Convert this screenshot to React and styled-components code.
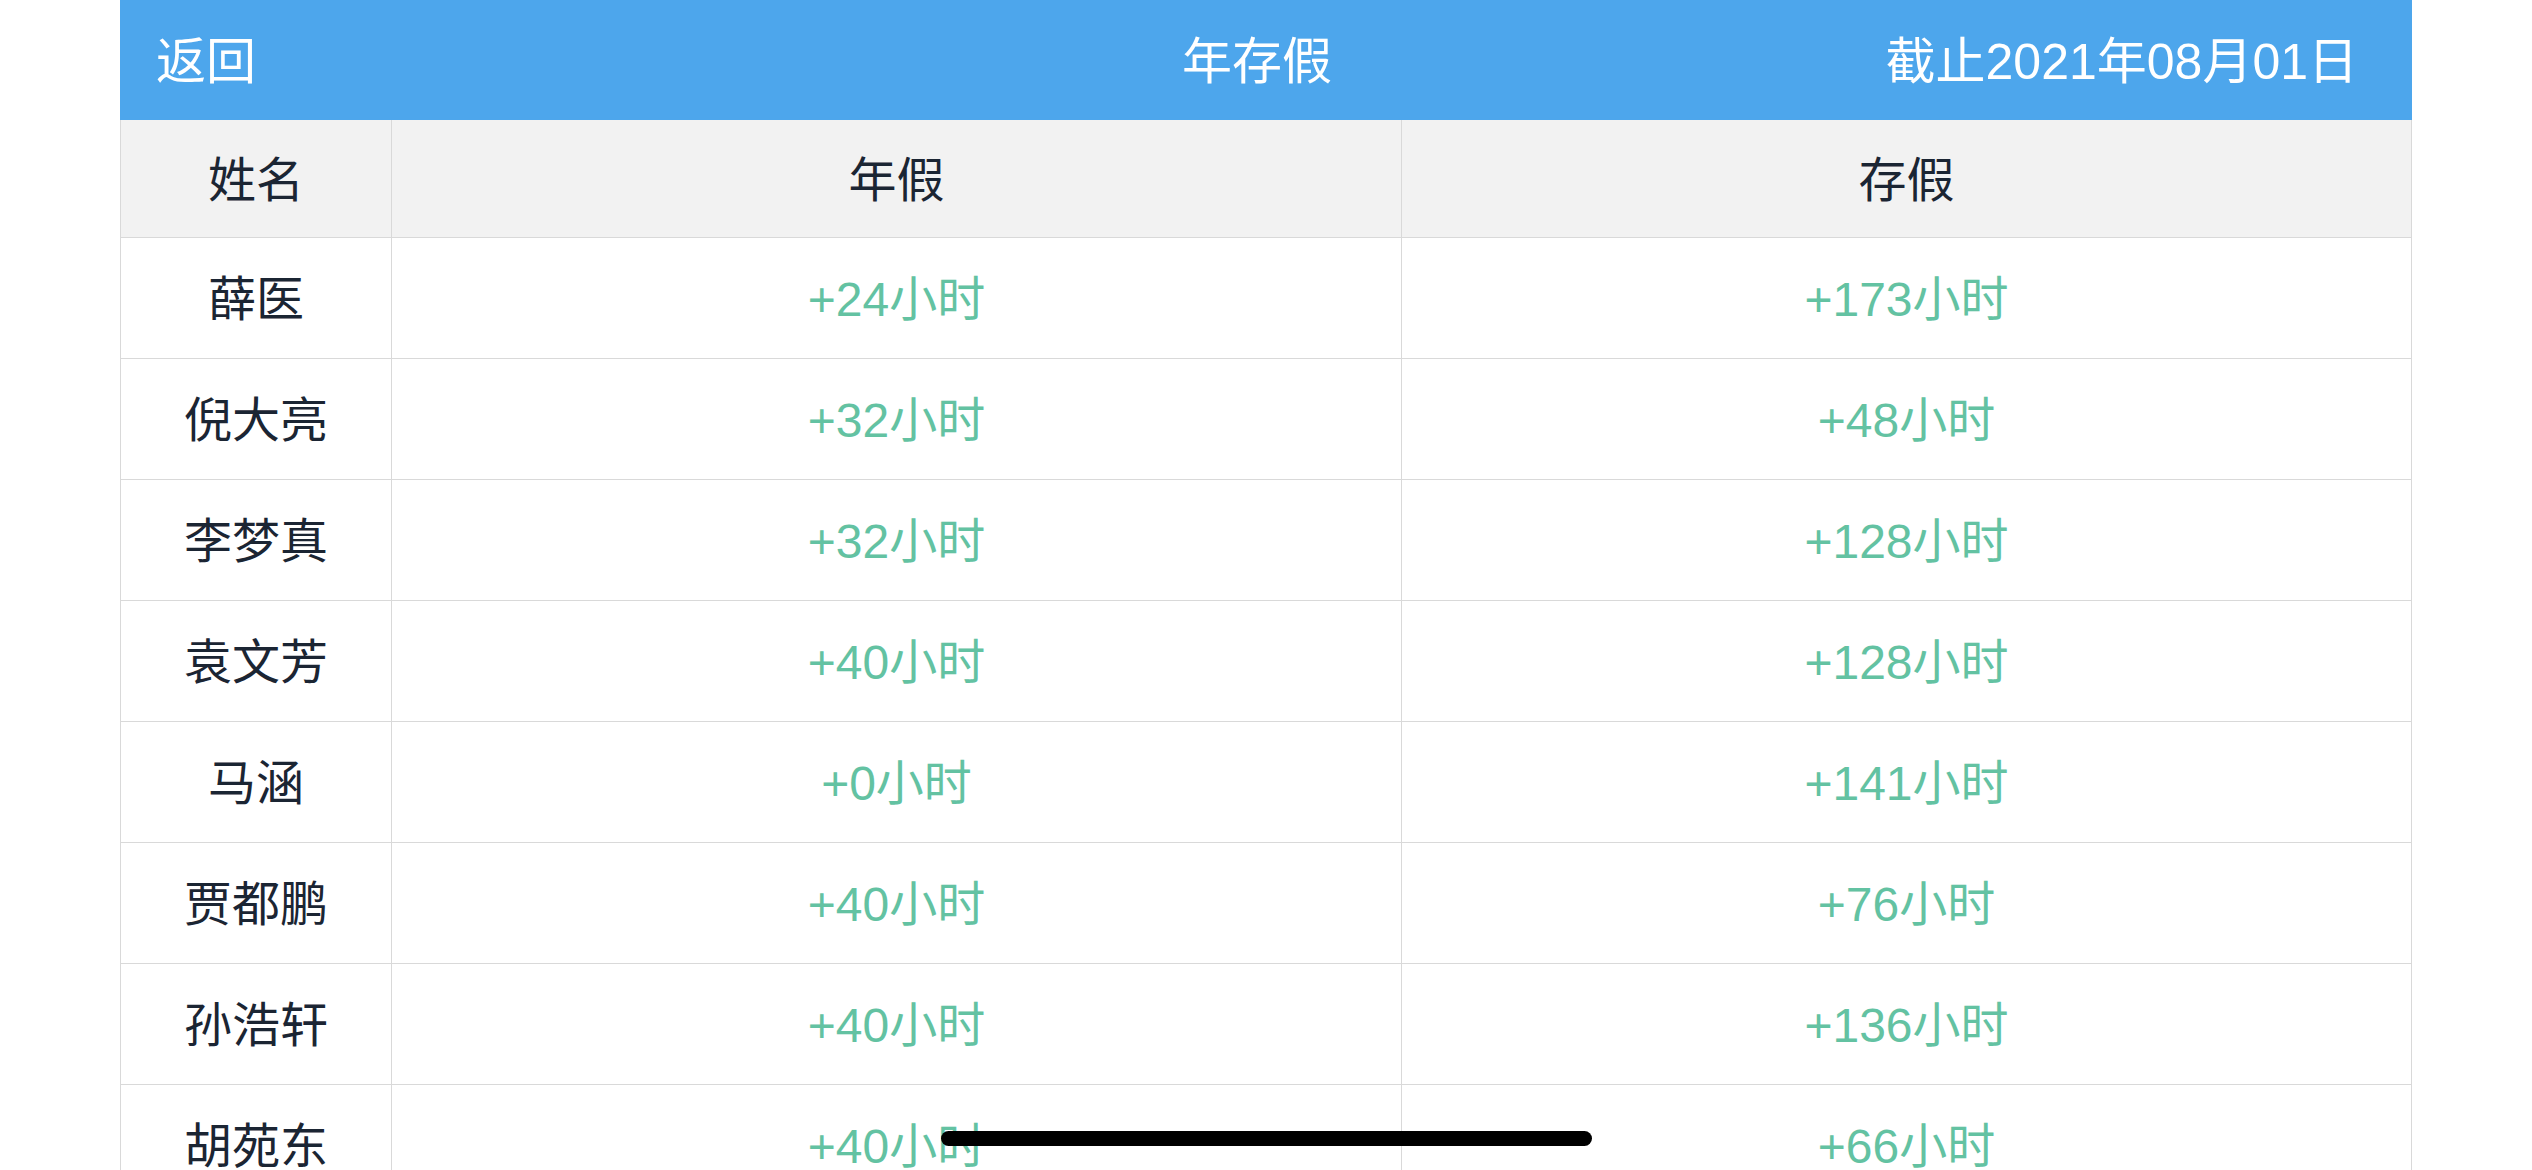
import React from "react";
import styled, { createGlobalStyle } from "styled-components";

const GlobalStyle = createGlobalStyle`
  html, body {
    margin: 0;
    padding: 0;
    height: 100%;
    overflow: hidden;
    background: #ffffff;
  }
  body {
    font-family: "Liberation Sans", "Noto Sans CJK SC", sans-serif;
    -webkit-font-smoothing: antialiased;
  }
  * { box-sizing: border-box; }
`;

const Screen = styled.div`
  padding: 0 120px;
  background: #ffffff;
`;

const TopBar = styled.header`
  display: grid;
  grid-template-columns: 1fr auto 1fr;
  align-items: center;
  height: 120px;
  padding: 0 54px 6px 36px;
  background: #4da6ec;
  color: #ffffff;
  font-size: 50px;
`;

const BackLink = styled.span`
  justify-self: start;
`;

const Title = styled.h1`
  margin: 0;
  font-size: 50px;
  font-weight: 400;
`;

const DateLabel = styled.span`
  justify-self: end;
`;

const Row = styled.div`
  display: grid;
  grid-template-columns: 272px 1fr 1fr;
  height: ${(p) => (p.$head ? 118 : 121)}px;
  background: ${(p) => (p.$head ? "#f2f2f2" : "#ffffff")};
  border-bottom: 1px solid #d9d9d9;
`;

const Cell = styled.div`
  display: flex;
  align-items: center;
  justify-content: center;
  padding-bottom: 6px;
  border-right: 1px solid #d9d9d9;
  font-size: 48px;
  color: ${(p) => (p.$accent ? "#63c2a2" : "#1b2533")};

  &:first-child {
    border-left: 1px solid #d9d9d9;
  }
`;

const HomeIndicator = styled.div`
  position: fixed;
  left: 50%;
  bottom: 24px;
  width: 651px;
  height: 15px;
  margin-left: -325px;
  border-radius: 8px;
  background: #000000;
`;

const records = [
  { name: "薛医", annual: 24, stored: 173 },
  { name: "倪大亮", annual: 32, stored: 48 },
  { name: "李梦真", annual: 32, stored: 128 },
  { name: "袁文芳", annual: 40, stored: 128 },
  { name: "马涵", annual: 0, stored: 141 },
  { name: "贾都鹏", annual: 40, stored: 76 },
  { name: "孙浩轩", annual: 40, stored: 136 },
  { name: "胡苑东", annual: 40, stored: 66 },
];

const hours = (n) => `+${n}小时`;

export default function App() {
  return (
    <>
      <GlobalStyle />
      <Screen>
        <TopBar>
          <BackLink>返回</BackLink>
          <Title>年存假</Title>
          <DateLabel>截止2021年08月01日</DateLabel>
        </TopBar>
        <Row $head>
          <Cell>姓名</Cell>
          <Cell>年假</Cell>
          <Cell>存假</Cell>
        </Row>
        {records.map((r) => (
          <Row key={r.name}>
            <Cell>{r.name}</Cell>
            <Cell $accent>{hours(r.annual)}</Cell>
            <Cell $accent>{hours(r.stored)}</Cell>
          </Row>
        ))}
      </Screen>
      <HomeIndicator />
    </>
  );
}
